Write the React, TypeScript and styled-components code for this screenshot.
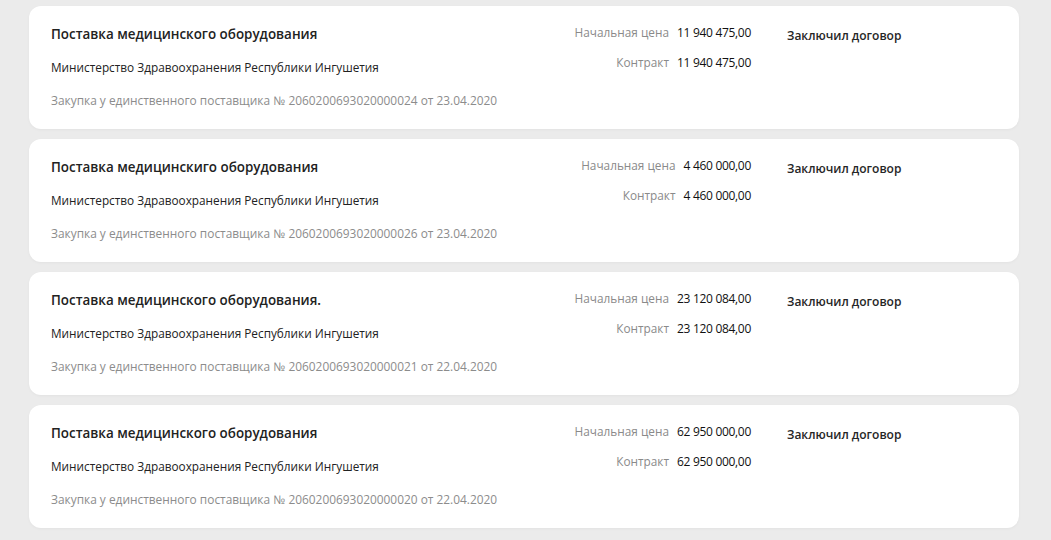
import React from "react";
import styled, { createGlobalStyle } from "styled-components";

const Global = createGlobalStyle`
  html, body { margin: 0; padding: 0; background: #ebebeb; }
  body { font-family: "Open Sans", "Noto Sans", Arial, sans-serif; }
`;

const List = styled.div`
  display: flex;
  flex-direction: column;
  gap: 10px;
  padding: 6px 32px 12px 29px;
`;

const Card = styled.div`
  background: #fff;
  border-radius: 12px;
  height: 123px;
  box-sizing: border-box;
  padding: 0 22px;
  display: grid;
  grid-template-columns: 1fr 236px 246px;
  box-shadow: 0 1px 3px rgba(0,0,0,0.04);
`;

const Main = styled.div`
  display: flex;
  flex-direction: column;
  padding-top: 18px;
`;

const Title = styled.div`
  font-size: 13.4px;
  font-weight: 600;
  color: #222;
  line-height: 20px;
`;

const Org = styled.div`
  font-size: 11.8px;
  color: #222;
  line-height: 20px;
  margin-top: 13px;
`;

const Meta = styled.div`
  font-size: 11.9px;
  color: #8c8c8c;
  line-height: 20px;
  margin-top: 13px;
`;

const Prices = styled.div`
  display: grid;
  grid-template-columns: 1fr auto;
  column-gap: 8px;
  row-gap: 11px;
  align-content: start;
  padding-top: 17px;
`;

const Label = styled.div`
  font-size: 11.8px;
  color: #8a8a8a;
  text-align: right;
  line-height: 19px;
`;

const Value = styled.div`
  font-size: 12px;
  color: #111;
  line-height: 19px;
  letter-spacing: -0.3px;
`;

const Status = styled.div`
  font-size: 12px;
  font-weight: 600;
  color: #262626;
  padding-top: 20px;
  padding-left: 36px;
  line-height: 20px;
`;

type Item = { title: string; num: string; date: string; start: string; contract: string };

const items: Item[] = [
  { title: "Поставка медицинского оборудования", num: "2060200693020000024", date: "23.04.2020", start: "11 940 475,00", contract: "11 940 475,00" },
  { title: "Поставка медицинскиго оборудования", num: "2060200693020000026", date: "23.04.2020", start: "4 460 000,00", contract: "4 460 000,00" },
  { title: "Поставка медицинского оборудования.", num: "2060200693020000021", date: "22.04.2020", start: "23 120 084,00", contract: "23 120 084,00" },
  { title: "Поставка медицинского оборудования", num: "2060200693020000020", date: "22.04.2020", start: "62 950 000,00", contract: "62 950 000,00" },
];

export default function App() {
  return (
    <>
      <Global />
      <List>
        {items.map((it, i) => (
          <Card key={i}>
            <Main>
              <Title>{it.title}</Title>
              <Org>Министерство Здравоохранения Республики Ингушетия</Org>
              <Meta>Закупка у единственного поставщика № {it.num} от {it.date}</Meta>
            </Main>
            <Prices>
              <Label>Начальная цена</Label>
              <Value>{it.start}</Value>
              <Label>Контракт</Label>
              <Value>{it.contract}</Value>
            </Prices>
            <Status>Заключил договор</Status>
          </Card>
        ))}
      </List>
    </>
  );
}
